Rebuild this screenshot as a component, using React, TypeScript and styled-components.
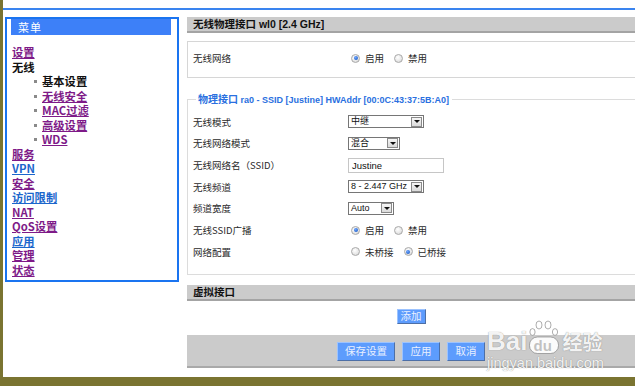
import React from 'react'
import styled, { createGlobalStyle } from 'styled-components'

const GlobalStyle = createGlobalStyle`
  html, body {
    margin: 0;
    padding: 0;
  }
  body {
    font-family: "Noto Sans CJK SC", "Liberation Sans", sans-serif;
    background: #7a7431;
  }
`

const cjk = `"Noto Sans CJK SC", sans-serif`
const latin = `"Liberation Sans", "Noto Sans CJK SC", sans-serif`

const Page = styled.div`
  height: 386px;
  padding: 0 0 9px 3px;
  box-sizing: border-box;
  background: #7a7431;
`

const Sheet = styled.div`
  position: relative;
  height: 377px;
  background: #fff;
  overflow: hidden;
`

const TopRule = styled.div`
  height: 8px;
  border-bottom: 2px solid #3a84ef;
`

const Main = styled.div`
  display: flex;
  gap: 8px;
  padding: 7px 0 0 2px;
`

/* ---------- left menu ---------- */

const Menu = styled.nav`
  width: 174px;
  height: 265px;
  flex: none;
  box-sizing: border-box;
  border: 2px solid #1a74f0;
  padding: 0 6px 0 4px;
  background: #fff;
`

const MenuTitle = styled.div`
  height: 16px;
  background: #3d80f8;
  color: #fff;
  font: 11px/16px ${cjk};
  padding-left: 7px;
  letter-spacing: 1px;
`

const MenuList = styled.ul`
  list-style: none;
  margin: 10px 0 0;
  padding: 0 0 0 1px;
`

const SubList = styled.ul`
  list-style: none;
  margin: 0;
  padding: 0 0 0 30px;
`

const Item = styled.li<{ $bullet?: boolean }>`
  position: relative;
  font: bold 11.3px/14.53px ${cjk};
  color: #111;

  ${(p) =>
    p.$bullet &&
    `
    &::before {
      content: '';
      position: absolute;
      left: -8px;
      top: 6px;
      width: 3px;
      height: 3px;
      background: #8a8a8a;
    }
  `}
`

const MenuLink = styled.a<{ $tone: 'purple' | 'blue' }>`
  color: ${(p) => (p.$tone === 'blue' ? '#1b66cc' : '#7e1a88')};
  text-decoration: underline;
`

/* ---------- right content ---------- */

const Content = styled.div`
  flex: 1;
  display: flex;
  flex-direction: column;
  min-width: 0;
`

const SectionHeader = styled.div<{ $gap?: number }>`
  height: 14px;
  margin-top: ${(p) => p.$gap ?? 0}px;
  background: #cbcbcb;
  border-bottom: 2px solid #a4a4a4;
  padding-left: 6px;
  font: bold 10.5px/14px ${latin};
  color: #111;
`

const Box = styled.div`
  margin-top: 8px;
  border: 1px solid #d6d6d6;
  border-right: none;
  padding: 9px 0 12px 5px;
`

const Row = styled.div<{ $h?: number }>`
  display: grid;
  grid-template-columns: 155px auto;
  align-items: center;
  height: ${(p) => (p.$h ? `${p.$h}px` : 'auto')};
`

const Label = styled.span`
  font: 9.5px/14px ${cjk};
  color: #2a2a2a;
`

const Fieldset = styled.fieldset`
  margin: 14px 0 0;
  padding: 4px 0 11px 5px;
  border: 1px solid #dcdcdc;
  border-right: none;
  min-inline-size: 0;
`

const Legend = styled.legend`
  margin-left: 3px;
  padding: 0 3px 0 2px;
  font: bold 9px/14px ${latin};
  color: #2a70e0;

  & b {
    font: bold 10px/14px ${cjk};
  }
`

const Radios = styled.div`
  display: flex;
  align-items: center;
  margin-left: 3px;
`

const RadioDot = styled.span<{ $on?: boolean }>`
  position: relative;
  width: 9px;
  height: 9px;
  box-sizing: border-box;
  border-radius: 50%;
  border: 1px solid #a9a9a9;
  background: radial-gradient(circle at 40% 35%, #ffffff 0%, #e6e6e6 60%, #cfcfcf 100%);

  ${(p) =>
    p.$on &&
    `
    &::after {
      content: '';
      position: absolute;
      left: 1.5px;
      top: 1.5px;
      width: 4px;
      height: 4px;
      border-radius: 50%;
      background: radial-gradient(circle at 40% 35%, #6fa6ff 0%, #1f5fc8 80%);
    }
  `}
`

const RadioText = styled.span`
  font: 9.5px/14px ${cjk};
  color: #2a2a2a;
  margin: 0 10px 0 5px;
`

const SelectBox = styled.div<{ $w: number }>`
  width: ${(p) => p.$w}px;
  height: 13px;
  box-sizing: border-box;
  border: 1px solid #767676;
  background: #fff;
  display: flex;
  align-items: center;
  justify-content: space-between;
  padding: 0 0 0 2px;
  font: 9px/11px ${latin};
  color: #111;
  white-space: nowrap;
  overflow: hidden;
`

const Arrow = styled.span`
  flex: none;
  width: 11px;
  height: 10px;
  margin-right: 1px;
  box-sizing: border-box;
  border: 1px solid #8a8a8a;
  background: linear-gradient(#f6f6f6, #dadada);
  display: flex;
  align-items: center;
  justify-content: center;

  &::after {
    content: '';
    border-left: 3px solid transparent;
    border-right: 3px solid transparent;
    border-top: 3px solid #111;
  }
`

const TextBox = styled.div`
  width: 96px;
  height: 15px;
  box-sizing: border-box;
  border: 1px solid #c6c6c6;
  padding-left: 3px;
  font: 9.5px/13px ${latin};
  color: #111;
`

const AddRow = styled.div`
  display: flex;
  justify-content: center;
  padding: 8px 0 11px;
`

const Footer = styled.div`
  height: 33px;
  box-sizing: border-box;
  background: #cbcbcb;
  border-bottom: 2px solid #a9a9a9;
  display: flex;
  justify-content: center;
  align-items: flex-start;
  gap: 7px;
  padding-top: 7px;
`

const Btn = styled.button<{ $small?: boolean }>`
  height: ${(p) => (p.$small ? 15 : 19)}px;
  padding: 0 ${(p) => (p.$small ? 3 : 7)}px;
  background: #5d9cfd;
  border: 1px solid;
  border-color: #9cc3ff #4d6fa6 #4d6fa6 #9cc3ff;
  color: #e9f0ff;
  font: 10.5px/1 ${cjk};
  cursor: pointer;
  min-width: ${(p) => (p.$small ? 26 : 38)}px;
`

/* ---------- watermark ---------- */

const Watermark = styled.div`
  position: absolute;
  left: 484px;
  top: 318px;
  pointer-events: none;
  color: rgba(255, 255, 255, 0.92);
  text-shadow: 0 0 1px rgba(100, 100, 100, 0.8);
`

const WmTop = styled.div`
  display: flex;
  align-items: flex-end;
  height: 36px;
`

const WmBig = styled.span`
  font: bold 26px/26px ${latin};
`

const Paw = styled.span`
  position: relative;
  width: 32px;
  height: 34px;
  margin: 0 2px 0 1px;
`

const PawText = styled.span`
  position: absolute;
  left: 5px;
  bottom: 1px;
  font: bold 15px/15px ${latin};
  color: rgba(190, 190, 190, 0.95);
  text-shadow: none;
`

const WmCn = styled.span`
  font: bold 20px/24px ${cjk};
`

const WmUrl = styled.div`
  font: 14.5px/16px ${latin};
  margin-top: 1px;
`

/* ---------- pieces ---------- */

type Tone = 'purple' | 'blue'

const topMenu: { text: string; tone: Tone }[] = [
  { text: '服务', tone: 'purple' },
  { text: 'VPN', tone: 'blue' },
  { text: '安全', tone: 'purple' },
  { text: '访问限制', tone: 'blue' },
  { text: 'NAT', tone: 'purple' },
  { text: 'QoS设置', tone: 'purple' },
  { text: '应用', tone: 'blue' },
  { text: '管理', tone: 'purple' },
  { text: '状态', tone: 'purple' },
]

const subMenu = ['无线安全', 'MAC过滤', '高级设置', 'WDS']

const Select: React.FC<{ value: string; width: number }> = ({ value, width }) => (
  <SelectBox $w={width}>
    <span>{value}</span>
    <Arrow />
  </SelectBox>
)

const RadioPair: React.FC<{ options: string[]; checked: number }> = ({ options, checked }) => (
  <Radios>
    {options.map((o, i) => (
      <React.Fragment key={o}>
        <RadioDot $on={i === checked} />
        <RadioText>{o}</RadioText>
      </React.Fragment>
    ))}
  </Radios>
)

const ROW = 21.67

const App: React.FC = () => {
  return (
    <>
      <GlobalStyle />
      <Page>
        <Sheet>
          <TopRule />
          <Main>
            <Menu>
              <MenuTitle>菜单</MenuTitle>
              <MenuList>
                <Item>
                  <MenuLink href="#" $tone="purple">设置</MenuLink>
                </Item>
                <Item>无线</Item>
                <li>
                  <SubList>
                    <Item $bullet>基本设置</Item>
                    {subMenu.map((s) => (
                      <Item $bullet key={s}>
                        <MenuLink href="#" $tone="purple">{s}</MenuLink>
                      </Item>
                    ))}
                  </SubList>
                </li>
                {topMenu.map((m) => (
                  <Item key={m.text}>
                    <MenuLink href="#" $tone={m.tone}>{m.text}</MenuLink>
                  </Item>
                ))}
              </MenuList>
            </Menu>

            <Content>
              <SectionHeader>无线物理接口 wl0 [2.4 GHz]</SectionHeader>

              <Box>
                <Row>
                  <Label>无线网络</Label>
                  <RadioPair options={['启用', '禁用']} checked={0} />
                </Row>
              </Box>

              <Fieldset>
                <Legend>
                  <b>物理接口</b> ra0 - SSID [Justine] HWAddr [00:0C:43:37:5B:A0]
                </Legend>
                <Row $h={ROW}>
                  <Label>无线模式</Label>
                  <Select value="中继" width={76} />
                </Row>
                <Row $h={ROW}>
                  <Label>无线网络模式</Label>
                  <Select value="混合" width={52} />
                </Row>
                <Row $h={ROW}>
                  <Label>无线网络名（SSID）</Label>
                  <TextBox>Justine</TextBox>
                </Row>
                <Row $h={ROW}>
                  <Label>无线频道</Label>
                  <Select value="8 - 2.447 GHz" width={76} />
                </Row>
                <Row $h={ROW}>
                  <Label>频道宽度</Label>
                  <Select value="Auto" width={46} />
                </Row>
                <Row $h={ROW}>
                  <Label>无线SSID广播</Label>
                  <RadioPair options={['启用', '禁用']} checked={0} />
                </Row>
                <Row $h={ROW}>
                  <Label>网络配置</Label>
                  <RadioPair options={['未桥接', '已桥接']} checked={1} />
                </Row>
              </Fieldset>

              <SectionHeader $gap={10}>虚拟接口</SectionHeader>

              <AddRow>
                <Btn $small>添加</Btn>
              </AddRow>

              <Footer>
                <Btn>保存设置</Btn>
                <Btn>应用</Btn>
                <Btn>取消</Btn>
              </Footer>
            </Content>
          </Main>

          <Watermark>
            <WmTop>
              <WmBig>Bai</WmBig>
              <Paw>
                <svg width="32" height="34" viewBox="0 0 32 34">
                  <g fill="rgba(255,255,255,0.92)" stroke="rgba(110,110,110,0.7)" strokeWidth="0.8">
                    <ellipse cx="11" cy="5" rx="3" ry="4" />
                    <ellipse cx="20" cy="5" rx="3" ry="4" />
                    <ellipse cx="4.5" cy="12" rx="2.6" ry="3.4" />
                    <ellipse cx="27" cy="12" rx="2.6" ry="3.4" />
                    <rect x="1.5" y="17" width="29" height="16.5" rx="8" />
                  </g>
                </svg>
                <PawText>du</PawText>
              </Paw>
              <WmCn>经验</WmCn>
            </WmTop>
            <WmUrl>jingyan.baidu.com</WmUrl>
          </Watermark>
        </Sheet>
      </Page>
    </>
  )
}

export default App
